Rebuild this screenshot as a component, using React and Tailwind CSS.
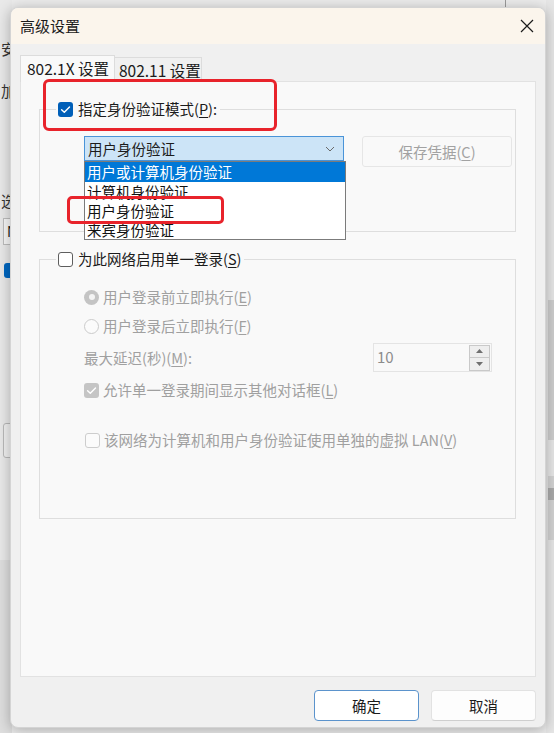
import React from "react";

const font = { fontFamily: '"Noto Sans CJK SC", "Noto Sans", sans-serif' };

// small tick used by the checkboxes
const Tick = () => (
  <svg width="11" height="11" viewBox="0 0 11 11" fill="none">
    <path d="M1.6 5.7 L4.3 8.3 L9.5 2.9" stroke="white" strokeWidth="1.4" strokeLinecap="round" strokeLinejoin="round" />
  </svg>
);

const CheckBox = ({ checked, disabled }) => {
  if (checked && !disabled)
    return <div className="flex h-[15px] w-[15px] shrink-0 items-center justify-center rounded-[3px] bg-[#005fb8]"><Tick /></div>;
  if (checked)
    return <div className="flex h-[15px] w-[15px] shrink-0 items-center justify-center rounded-[3px] bg-[#c5c5c5]"><Tick /></div>;
  if (disabled)
    return <div className="h-[15px] w-[15px] shrink-0 rounded-[3px] border border-[#cdcdcd] bg-[#fbfbfb]" />;
  return <div className="h-[15px] w-[15px] shrink-0 rounded-[3px] border border-[#5e5e5e] bg-white" />;
};

const Radio = ({ checked }) =>
  checked ? (
    <div className="flex h-[15px] w-[15px] shrink-0 items-center justify-center rounded-full bg-[#c4c4c4]">
      <div className="h-[6px] w-[6px] rounded-full bg-[#f4f4f4]" />
    </div>
  ) : (
    <div className="h-[15px] w-[15px] shrink-0 rounded-full border border-[#cbcbcb] bg-[#fbfbfb]" />
  );

// label with an underlined access key, e.g. 指定身份验证模式(P):
const Label = ({ text, k, after = ")", className = "" }) => (
  <span className={"whitespace-nowrap text-[14.5px] leading-[18px] " + className}>
    {text}(<span className="underline underline-offset-2">{k}</span>{after}
  </span>
);

export default function App() {
  return (
    <div className="relative h-[733px] w-[554px] overflow-hidden bg-[#ececec]" style={font}>
      {/* window behind the dialog */}
      <div className="absolute left-0 top-0 h-full w-[12px] bg-[#e9e9e9]">
        <span className="absolute left-[1px] top-[38px] text-[15px] text-[#333]">安</span>
        <span className="absolute left-[1px] top-[80px] text-[15px] text-[#333]">加</span>
        <span className="absolute left-[1px] top-[190px] text-[15px] text-[#333]">选</span>
        <div className="absolute left-[3px] top-[218px] h-[27px] w-[30px] border border-[#bdbdbd] bg-[#f7f7f7] pl-[3px] text-[14px] leading-[25px] text-[#222]">N</div>
        <div className="absolute left-[4px] top-[263px] h-[15px] w-[15px] rounded-[3px] bg-[#0067c0]" />
        <div className="absolute left-[3px] top-[423px] h-[35px] w-[30px] rounded-[3px] border border-[#b9b9b9] bg-[#f0f0f0]" />
        <div className="absolute left-0 top-[560px] h-[173px] w-full bg-[#dedede]" />
      </div>
      <div className="absolute right-0 top-0 h-full w-[8px] bg-[#e6e6e6]">
        <div className="absolute right-0 top-[300px] h-[140px] w-[6px] bg-[#cdcdcd]" />
        <div className="absolute right-0 top-[476px] h-[64px] w-[6px] bg-[#d2d2d2]" />
        <div className="absolute right-0 top-[488px] h-[12px] w-[6px] bg-[#a9a9a9]" />
      </div>
      <div className="absolute left-[505px] top-0 h-[8px] w-px bg-[#9a9a9a]" />

      {/* dialog */}
      <div className="absolute left-[10px] top-[7px] flex h-[721px] w-[536px] flex-col overflow-hidden rounded-[8px] border border-[#d4d4d4] bg-[#f0f0f0] shadow-[0_2px_14px_rgba(0,0,0,0.28)]">
        <div className="flex h-[36px] shrink-0 items-center justify-between bg-[#fbf5ec] pl-[9px] pr-[11px]">
          <span className="text-[15px] text-[#1b1b1b]">高级设置</span>
          <svg width="14" height="14" viewBox="0 0 14 14" fill="none">
            <path d="M1 1 L13 13 M13 1 L1 13" stroke="#1b1b1b" strokeWidth="1.2" />
          </svg>
        </div>

        {/* tabs */}
        <div className="mt-[11px] flex h-[26px] items-end pl-[9px]">
          <div className="relative z-10 -mb-px flex h-[27px] w-[95px] items-start border border-b-0 border-[#dcdcdc] bg-[#f9f9f9] pl-[6px] pt-[1px] text-[15.5px] text-[#1b1b1b]">
            802.1X 设置
          </div>
          <div className="flex h-[24px] w-[87px] items-start border border-b-0 border-l-0 border-[#dcdcdc] bg-[#f0f0f0] pl-[4px] pt-[1px] text-[15.5px] text-[#1b1b1b]">
            802.11 设置
          </div>
        </div>

        {/* tab page */}
        <div className="mx-[9px] h-[596px] shrink-0 border border-[#e2e2e2] bg-[#f9f9f9] pl-[18px] pr-[19px] pt-[27px]">
          <div className="h-[123px] border border-[#dedede]">
            <div className="-mt-[9px] ml-[16px] flex h-[16px] w-fit items-center gap-[5px] bg-[#f9f9f9] pl-[2px] pr-[3px] text-[#1b1b1b]">
              <CheckBox checked />
              <Label text="指定身份验证模式" k="P" after="):" />
            </div>
            <div className="ml-[44px] mt-[19px] flex items-start">
              <div className="relative z-10 h-[25px] w-[260px]">
                <div className="flex h-[25px] items-center justify-between border border-[#4a94d8] bg-[#cce4f7] pl-[3px] pr-[8px] text-[14.5px] text-[#1b1b1b]">
                  <span>用户身份验证</span>
                  <svg width="10" height="6" viewBox="0 0 10 6" fill="none">
                    <path d="M1 1 L5 5 L9 1" stroke="#6a6a6a" strokeWidth="1" />
                  </svg>
                </div>
                <div className="absolute left-0 top-[25px] w-[262px] border border-[#7b7b7b] bg-white text-[14.5px] leading-[19px] text-[#111]">
                  <div className="h-[20px] bg-[#0078d7] pl-[2px] text-white">用户或计算机身份验证</div>
                  <div className="h-[19px] pl-[2px]">计算机身份验证</div>
                  <div className="h-[19px] pl-[2px]">用户身份验证</div>
                  <div className="h-[19px] pl-[2px]">来宾身份验证</div>
                </div>
              </div>
              <div className="ml-[18px] flex h-[31px] w-[150px] items-center justify-center rounded-[3px] border border-[#e6e6e6] bg-[#f9f9f9] text-[#a2a2a2]">
                <Label text="保存凭据" k="C" />
              </div>
            </div>
          </div>

          <div className="mt-[27px] h-[260px] border border-[#dedede]">
            <div className="-mt-[9px] ml-[16px] flex h-[16px] w-fit items-center gap-[5px] bg-[#f9f9f9] pl-[2px] pr-[3px] text-[#1b1b1b]">
              <CheckBox />
              <Label text="为此网络启用单一登录" k="S" />
            </div>
            <div className="ml-[44px] mr-[23px] text-[#a0a0a0]">
              <div className="mt-[20px] flex h-[20px] items-center gap-[4px]">
                <Radio checked />
                <Label text="用户登录前立即执行" k="E" />
              </div>
              <div className="mt-[9px] flex h-[20px] items-center gap-[4px]">
                <Radio />
                <Label text="用户登录后立即执行" k="F" />
              </div>
              <div className="mt-[7px] flex h-[29px] items-center justify-between">
                <Label text="最大延迟(秒)" k="M" after="):" />
                <div className="flex h-[29px] w-[119px] items-center justify-between border border-[#e4e4e4] bg-[#f9f9f9] pl-[3px] pr-px">
                  <span className="text-[15px] text-[#8c8c8c]">10</span>
                  <div className="flex h-[26px] w-[21px] flex-col border border-[#c9c9c9] bg-[#eeeeee]">
                    <div className="flex flex-1 items-center justify-center border-b border-[#c9c9c9]">
                      <svg width="7" height="4" viewBox="0 0 7 4"><path d="M0 4 L3.5 0 L7 4 Z" fill="#6f6f6f" /></svg>
                    </div>
                    <div className="flex flex-1 items-center justify-center">
                      <svg width="7" height="4" viewBox="0 0 7 4"><path d="M0 0 L3.5 4 L7 0 Z" fill="#6f6f6f" /></svg>
                    </div>
                  </div>
                </div>
              </div>
              <div className="mt-[8px] flex h-[20px] items-center gap-[4px]">
                <CheckBox checked disabled />
                <Label text="允许单一登录期间显示其他对话框" k="L" />
              </div>
              <div className="mt-[30px] flex h-[20px] items-center gap-[4px] pl-px">
                <CheckBox disabled />
                <Label text="该网络为计算机和用户身份验证使用单独的虚拟 LAN" k="V" />
              </div>
            </div>
          </div>
        </div>

        {/* buttons */}
        <div className="mt-[13px] flex justify-end gap-[12px] pr-[9px]">
          <button className="h-[31px] w-[105px] rounded-[4px] border border-[#5b93cc] bg-white text-[14.5px] text-[#1b1b1b]">确定</button>
          <button className="h-[31px] w-[105px] rounded-[4px] border border-[#e2e2e2] border-b-[#cfcfcf] bg-[#fdfdfd] text-[14.5px] text-[#1b1b1b]">取消</button>
        </div>
      </div>

      {/* red annotation boxes */}
      <div className="absolute left-[43px] top-[79px] z-20 h-[52px] w-[234px] rounded-[6px] border-[3px] border-[#e8232b]" />
      <div className="absolute left-[67px] top-[196px] z-20 h-[28px] w-[157px] rounded-[5px] border-[3px] border-[#e8232b]" />
    </div>
  );
}
